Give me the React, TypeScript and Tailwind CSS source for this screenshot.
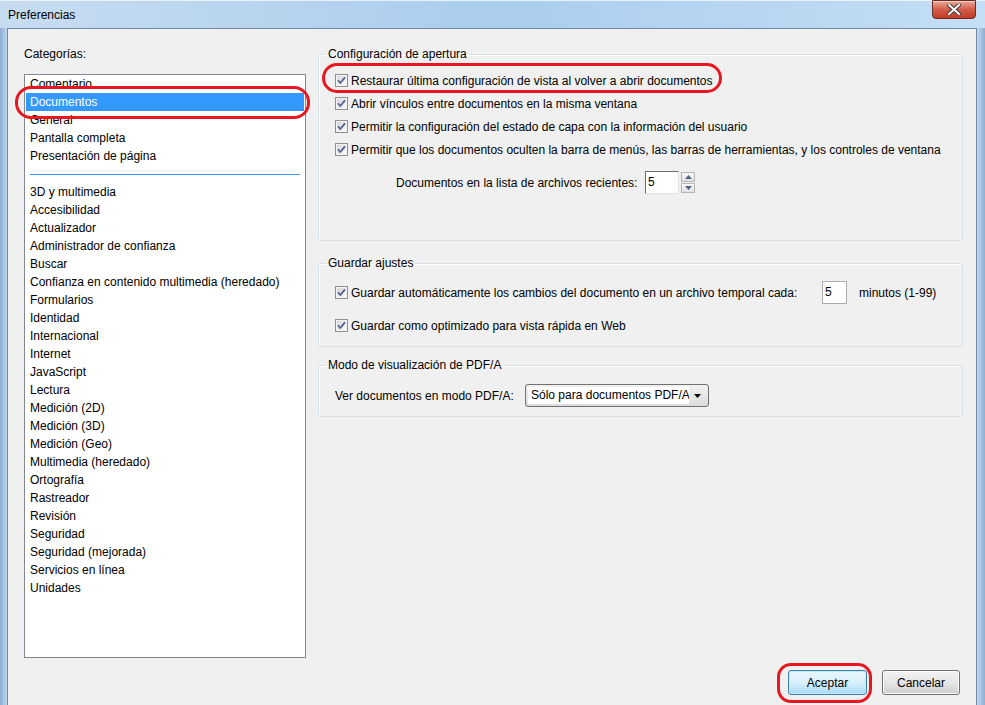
import React from "react";

const groupA = ["Comentario", "Documentos", "General", "Pantalla completa", "Presentación de página"];

const groupB = [
  "3D y multimedia",
  "Accesibilidad",
  "Actualizador",
  "Administrador de confianza",
  "Buscar",
  "Confianza en contenido multimedia (heredado)",
  "Formularios",
  "Identidad",
  "Internacional",
  "Internet",
  "JavaScript",
  "Lectura",
  "Medición (2D)",
  "Medición (3D)",
  "Medición (Geo)",
  "Multimedia (heredado)",
  "Ortografía",
  "Rastreador",
  "Revisión",
  "Seguridad",
  "Seguridad (mejorada)",
  "Servicios en línea",
  "Unidades",
];

const Check = () => (
  <svg width="13" height="13" viewBox="0 0 13 13" className="shrink-0">
    <defs>
      <linearGradient id="cbfill" x1="0" y1="0" x2="1" y2="1">
        <stop offset="0" stopColor="#d6d6d6" />
        <stop offset="1" stopColor="#fafafa" />
      </linearGradient>
    </defs>
    <rect x="0.5" y="0.5" width="12" height="12" fill="#f4f4f4" stroke="#8e8f8f" />
    <rect x="2" y="2" width="9" height="9" fill="url(#cbfill)" />
    <path d="M3 6.3 L5.3 9 L10 3.4" fill="none" stroke="#4b5f8f" strokeWidth="1.7" />
  </svg>
);

const CheckRow = ({ label }: { label: string }) => (
  <div className="flex items-center gap-[3px] h-[23px]">
    <Check />
    <span>{label}</span>
  </div>
);

const Tri = ({ up }: { up?: boolean }) => (
  <svg width="7" height="4" viewBox="0 0 7 4">
    <path d={up ? "M0 4 L3.5 0 L7 4 Z" : "M0 0 L3.5 4 L7 0 Z"} fill="#4d6185" />
  </svg>
);

// group box: the legend sits on the border, the padding goes on the inner block
const Group = ({ title, className, children }: { title: string; className?: string; children: React.ReactNode }) => (
  <fieldset className={"border border-[#d5dfe5] rounded-[3px] shadow-[inset_1px_1px_0_#ffffff] p-0 " + (className ?? "")}>
    <legend className="ml-[7px] px-[2px] leading-[18px]">{title}</legend>
    {children}
  </fieldset>
);

export default function App() {
  return (
    <div
      className="relative w-[985px] h-[705px] overflow-hidden flex flex-col bg-[#b9d4ee] text-[12px] text-black"
      style={{ fontFamily: '"Liberation Sans", Arial, sans-serif' }}
    >
      {/* title bar */}
      <div className="h-[28px] shrink-0 flex items-start bg-gradient-to-r from-[#c7dcf0] via-[#aacdee] to-[#c4def5] border-t border-[#e9f2fb]">
        <div className="pl-[8px] pt-[5px] flex-1">Preferencias</div>
        <div className="mr-[9px] w-[44px] h-[19px] -mt-px rounded-b-[4px] border border-[#6b2a22] bg-gradient-to-b from-[#e9a99b] via-[#d35c48] to-[#c23a24] flex items-center justify-center shadow-[inset_0_1px_0_#f6cfc6]">
          <svg width="14" height="11" viewBox="0 0 14 11">
            <path d="M2 1 L12 10 M12 1 L2 10" stroke="#3b3b3b" strokeWidth="4" strokeLinecap="square" />
            <path d="M2 1 L12 10 M12 1 L2 10" stroke="#ffffff" strokeWidth="2" strokeLinecap="square" />
          </svg>
        </div>
      </div>

      <div className="flex flex-1 min-h-0">
        <div className="w-[7px] shrink-0 bg-gradient-to-r from-[#8eaed0] to-[#bcd6ef]" />

        {/* client area */}
        <div className="flex-1 flex flex-col bg-[#f0f0f0] border-l border-t border-[#6f8aa6]">
          <div className="flex pt-[16px] pl-[16px] pr-[13px]">
            {/* categories */}
            <div className="w-[282px] shrink-0 flex flex-col">
              <div className="leading-[18px]">Categorías:</div>
              <div className="mt-[11px] h-[584px] bg-white border border-[#828790] px-px">
                {groupA.map((c) => (
                  <div
                    key={c}
                    className={
                      "h-[18px] leading-[18px] pl-[4px] " + (c === "Documentos" ? "bg-[#3399ff] text-white" : "")
                    }
                  >
                    {c}
                  </div>
                ))}
                <div className="h-[18px] flex items-center px-[4px]">
                  <div className="h-px flex-1 bg-[#3399ff]" />
                </div>
                {groupB.map((c) => (
                  <div key={c} className="h-[18px] leading-[18px] pl-[4px]">
                    {c}
                  </div>
                ))}
              </div>
            </div>

            {/* settings */}
            <div className="ml-[12px] flex-1 flex flex-col">
              <Group title="Configuración de apertura">
                <div className="pl-[16px] pt-[6px] pb-[46px]">
                  <CheckRow label="Restaurar última configuración de vista al volver a abrir documentos" />
                  <CheckRow label="Abrir vínculos entre documentos en la misma ventana" />
                  <CheckRow label="Permitir la configuración del estado de capa con la información del usuario" />
                  <CheckRow label="Permitir que los documentos oculten la barra de menús, las barras de herramientas, y los controles de ventana" />
                  <div className="flex items-center mt-[10px] pl-[61px]">
                    <span className="w-[249px]">Documentos en la lista de archivos recientes:</span>
                    <div className="w-[34px] h-[23px] bg-white border border-[#6d6d6d] border-r-[#e3e3e3] border-b-[#e3e3e3] pl-[2px] leading-[20px]">
                      5
                    </div>
                    <div className="ml-[2px] flex flex-col gap-px">
                      <div className="w-[14px] h-[10px] border border-[#b5b5b5] bg-gradient-to-b from-[#f9f9f9] to-[#e2e2e2] flex items-center justify-center">
                        <Tri up />
                      </div>
                      <div className="w-[14px] h-[10px] border border-[#b5b5b5] bg-gradient-to-b from-[#f9f9f9] to-[#e2e2e2] flex items-center justify-center">
                        <Tri />
                      </div>
                    </div>
                  </div>
                </div>
              </Group>

              <Group title="Guardar ajustes" className="mt-[13px]">
                <div className="pl-[16px] pt-[9px] pb-[9px]">
                  <div className="flex items-center h-[23px]">
                    <div className="w-[487px] flex items-center gap-[3px]">
                      <Check />
                      <span>Guardar automáticamente los cambios del documento en un archivo temporal cada:</span>
                    </div>
                    <div className="w-[25px] h-[23px] bg-white border border-[#abadb3] pl-[2px] leading-[21px]">5</div>
                    <span className="ml-[12px]">minutos (1-99)</span>
                  </div>
                  <div className="mt-[10px]">
                    <CheckRow label="Guardar como optimizado para vista rápida en Web" />
                  </div>
                </div>
              </Group>

              <Group title="Modo de visualización de PDF/A" className="mt-[9px]">
                <div className="pl-[16px] pt-[10px] pb-[9px] flex items-center">
                  <span className="w-[190px]">Ver documentos en modo PDF/A:</span>
                  <div className="w-[184px] h-[23px] rounded-[3px] border border-[#707070] bg-gradient-to-b from-[#f2f2f2] to-[#dcdcdc] flex items-center p-[2px]">
                    <div className="flex-1 h-full bg-white pl-[3px] leading-[17px] whitespace-nowrap overflow-hidden">
                      Sólo para documentos PDF/A
                    </div>
                    <div className="w-[17px] shrink-0 flex items-center justify-center">
                      <svg width="7" height="4" viewBox="0 0 7 4">
                        <path d="M0 0 L3.5 4 L7 0 Z" fill="#000" />
                      </svg>
                    </div>
                  </div>
                </div>
              </Group>
            </div>
          </div>

          {/* dialog buttons */}
          <div className="flex justify-end gap-[15px] mt-[12px] pr-[16px]">
            <button className="w-[79px] h-[25px] rounded-[3px] border border-[#3c7fb1] bg-gradient-to-b from-[#eaf6fd] via-[#d9f0fc] to-[#a7d9f5] shadow-[inset_0_0_0_1px_#c7e9fb]">
              Aceptar
            </button>
            <button className="w-[78px] h-[25px] rounded-[3px] border border-[#707070] bg-gradient-to-b from-[#f2f2f2] via-[#e6e6e6] to-[#cfcfcf] shadow-[inset_0_0_0_1px_#fbfbfb]">
              Cancelar
            </button>
          </div>
        </div>

        <div className="w-[9px] shrink-0 border-l border-[#6f8aa6] bg-gradient-to-r from-[#c2d9f0] to-[#8eaed0]" />
      </div>

      {/* red highlight marks */}
      <div className="absolute left-[15px] top-[86px] w-[295px] h-[33px] rounded-[16px] border-[3px] border-[#e8161e]" />
      <div className="absolute left-[322px] top-[63px] w-[400px] h-[30px] rounded-[15px] border-[3px] border-[#e8161e]" />
      <div className="absolute left-[777px] top-[663px] w-[95px] h-[40px] rounded-[14px] border-[3px] border-[#e8161e]" />
    </div>
  );
}
